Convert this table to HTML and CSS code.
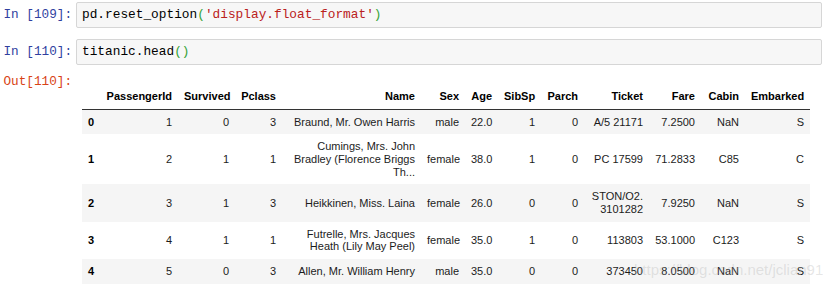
FILE: index.html
```html
<!DOCTYPE html>
<html lang="en">
<head>
    <meta charset="UTF-8">
    <title>titanic.head()</title>
    <link rel="stylesheet" href="styles.css">
</head>
<body>
    <div class="notebook">
        <div class="cell">
            <div class="prompt prompt-in">In [109]:</div>
            <div class="input">pd.reset_option<span class="bracket">(</span><span class="string">'display.float_format'</span><span class="bracket">)</span></div>
        </div>

        <div class="cell">
            <div class="prompt prompt-in">In [110]:</div>
            <div class="input">titanic.head<span class="bracket">()</span></div>
        </div>

        <div class="cell cell-output">
            <div class="prompt prompt-out">Out[110]:</div>
            <div class="output-area">
                <table class="dataframe">
                    <colgroup>
                        <col class="c-index">
                        <col class="c-pid">
                        <col class="c-surv">
                        <col class="c-pclass">
                        <col class="c-name">
                        <col class="c-sex">
                        <col class="c-age">
                        <col class="c-sibsp">
                        <col class="c-parch">
                        <col class="c-ticket">
                        <col class="c-fare">
                        <col class="c-cabin">
                        <col class="c-emb">
                    </colgroup>
                    <thead>
                        <tr>
                            <th></th>
                            <th>PassengerId</th>
                            <th>Survived</th>
                            <th>Pclass</th>
                            <th>Name</th>
                            <th>Sex</th>
                            <th>Age</th>
                            <th>SibSp</th>
                            <th>Parch</th>
                            <th>Ticket</th>
                            <th>Fare</th>
                            <th>Cabin</th>
                            <th>Embarked</th>
                        </tr>
                    </thead>
                    <tbody>
                        <tr>
                            <th>0</th>
                            <td>1</td><td>0</td><td>3</td>
                            <td>Braund, Mr. Owen Harris</td>
                            <td>male</td><td>22.0</td><td>1</td><td>0</td>
                            <td>A/5 21171</td><td>7.2500</td><td>NaN</td><td>S</td>
                        </tr>
                        <tr>
                            <th>1</th>
                            <td>2</td><td>1</td><td>1</td>
                            <td>Cumings, Mrs. John Bradley (Florence Briggs Th...</td>
                            <td>female</td><td>38.0</td><td>1</td><td>0</td>
                            <td>PC 17599</td><td>71.2833</td><td>C85</td><td>C</td>
                        </tr>
                        <tr>
                            <th>2</th>
                            <td>3</td><td>1</td><td>3</td>
                            <td>Heikkinen, Miss. Laina</td>
                            <td>female</td><td>26.0</td><td>0</td><td>0</td>
                            <td>STON/O2. 3101282</td><td>7.9250</td><td>NaN</td><td>S</td>
                        </tr>
                        <tr>
                            <th>3</th>
                            <td>4</td><td>1</td><td>1</td>
                            <td>Futrelle, Mrs. Jacques Heath (Lily May Peel)</td>
                            <td>female</td><td>35.0</td><td>1</td><td>0</td>
                            <td>113803</td><td>53.1000</td><td>C123</td><td>S</td>
                        </tr>
                        <tr>
                            <th>4</th>
                            <td>5</td><td>0</td><td>3</td>
                            <td>Allen, Mr. William Henry</td>
                            <td>male</td><td>35.0</td><td>0</td><td>0</td>
                            <td>373450</td><td>8.0500</td><td>NaN</td><td>S</td>
                        </tr>
                    </tbody>
                </table>
            </div>
        </div>
    </div>
    <div class="watermark">https://blog.csdn.net/jclian91</div>
</body>
</html>
```

FILE: styles.css
```css
:root {
    --prompt-in: #303f9f;
    --prompt-out: #d84315;
    --code-bg: #f7f7f7;
    --code-border: #d6d6d6;
    --string-color: #ba2121;
    --bracket-color: #36a336;
    --stripe: #f5f5f5;
}

body {
    margin: 0;
    padding: 2px 0 0;
    background: white;
    font-family: "Liberation Sans", Arial, sans-serif;
    position: relative;
    overflow: hidden;
}

.cell {
    display: flex;
    margin-bottom: 11px;
}

.prompt {
    flex: 0 0 72px;
    padding: 5px 4px 0 0;
    text-align: right;
    font-family: "Liberation Mono", "DejaVu Sans Mono", monospace;
    font-size: 12.7px;
    line-height: 16px;
    white-space: pre;
}

.prompt-in {
    color: var(--prompt-in);
}

.prompt-out {
    color: var(--prompt-out);
    padding-top: 3px;
}

.input {
    flex: 1;
    margin-right: 5px;
    padding: 4px 5px;
    background: var(--code-bg);
    border: 1px solid var(--code-border);
    border-radius: 2px;
    font-family: "Liberation Mono", "DejaVu Sans Mono", monospace;
    font-size: 12.8px;
    line-height: 16px;
    color: #000;
}

.string {
    color: var(--string-color);
}

.bracket {
    color: var(--bracket-color);
}

.cell-output {
    margin-top: -5px;
}

.output-area {
    flex: 1;
    padding: 13px 0 0 6px;
}

.dataframe {
    border-collapse: collapse;
    table-layout: fixed;
    width: 728px;
    font-size: 11px;
    line-height: 12.65px;
    color: #1c1c1c;
}

.c-index { width: 18px; }
.c-pid { width: 78px; }
.c-surv { width: 57px; }
.c-pclass { width: 47px; }
.c-name { width: 139px; }
.c-sex { width: 44px; }
.c-age { width: 33px; }
.c-sibsp { width: 43px; }
.c-parch { width: 43px; }
.c-ticket { width: 65px; }
.c-fare { width: 52px; }
.c-cabin { width: 44px; }
.c-emb { width: 65px; }

.dataframe th,
.dataframe td {
    padding: 6px;
    text-align: right;
    vertical-align: middle;
    white-space: normal;
}

.dataframe thead th {
    font-weight: bold;
    color: #000;
    vertical-align: bottom;
    border-bottom: 1px solid #333;
}

.dataframe tbody th {
    text-align: left;
    font-weight: bold;
    color: #000;
}

.dataframe tbody tr:nth-child(odd) {
    background: var(--stripe);
}

.watermark {
    position: absolute;
    left: 634px;
    top: 261px;
    font-family: "Liberation Sans", Arial, sans-serif;
    font-size: 15px;
    color: rgba(175, 175, 175, 0.32);
    white-space: nowrap;
}
```
